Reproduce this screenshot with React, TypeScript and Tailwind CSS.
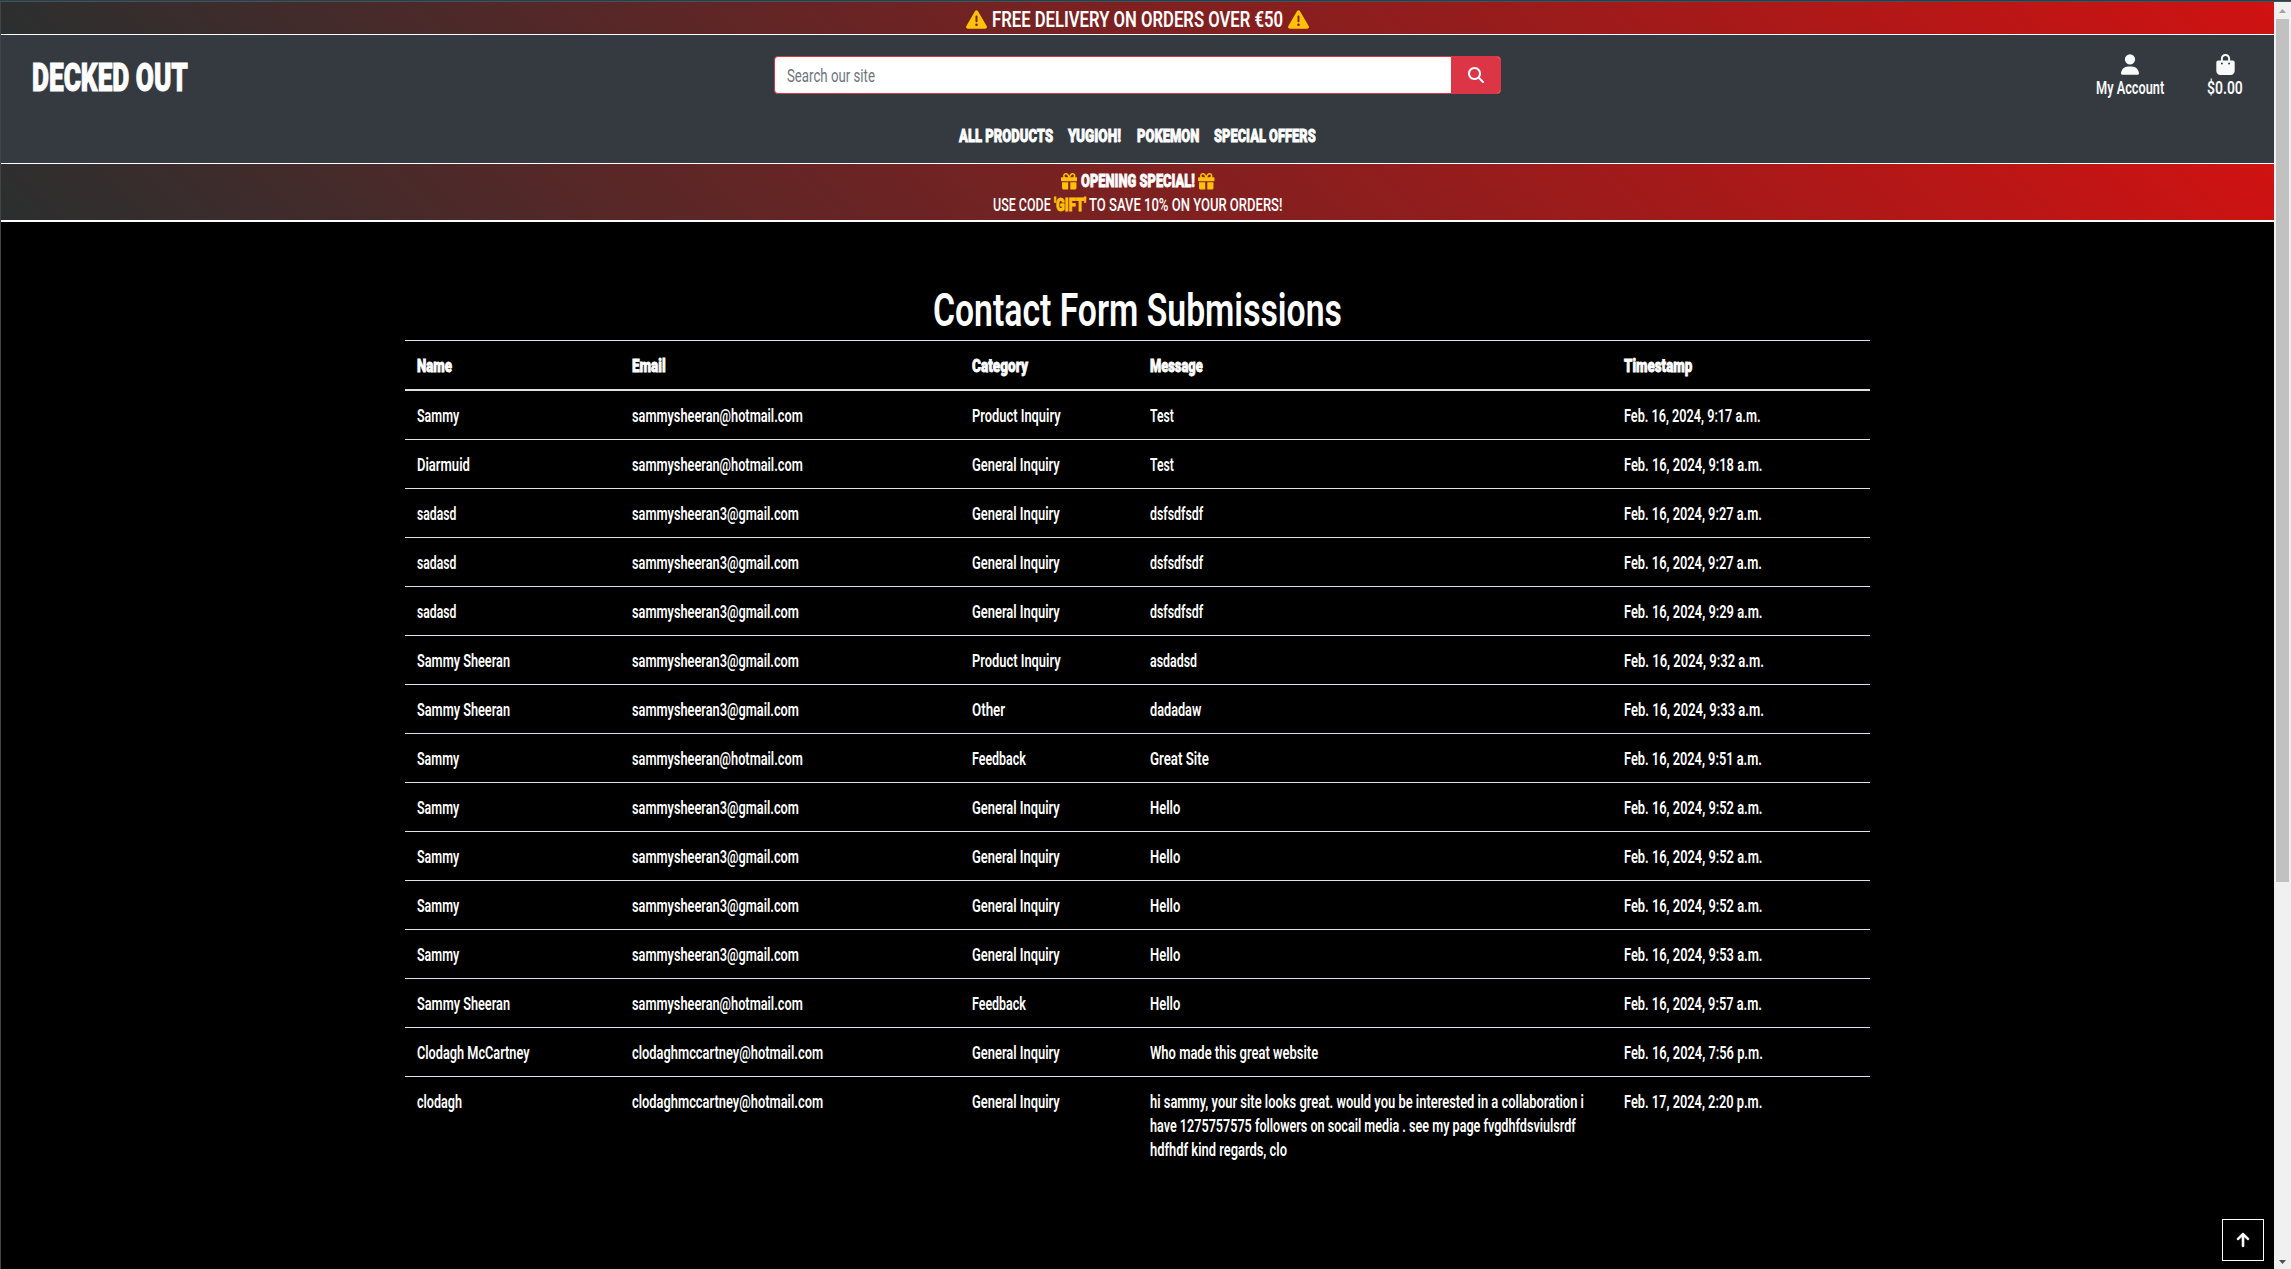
import { useLayoutEffect, useRef, useState } from "react";
import {
  FaArrowUp,
  FaBagShopping,
  FaGift,
  FaMagnifyingGlass,
  FaTriangleExclamation,
  FaUser,
} from "react-icons/fa6";

// Condenses a single line of text horizontally so it fills exactly `w` pixels.
function Fit({ w, children, className = "" }: { w: number; children: string; className?: string }) {
  const ref = useRef<HTMLSpanElement>(null);
  const [scale, setScale] = useState(1);
  useLayoutEffect(() => {
    if (ref.current) setScale(w / ref.current.offsetWidth);
  }, [w, children]);
  return (
    <span className={`block shrink-0 ${className}`} style={{ width: w }}>
      <span
        ref={ref}
        className="block w-max origin-left whitespace-nowrap"
        style={{ transform: `scaleX(${scale})` }}
      >
        {children}
      </span>
    </span>
  );
}

type Cell = [string, number];
const HOT: Cell = ["sammysheeran@hotmail.com", 171];
const GM: Cell = ["sammysheeran3@gmail.com", 167];
const CLO: Cell = ["clodaghmccartney@hotmail.com", 191];
const PRODUCT: Cell = ["Product Inquiry", 88.5];
const GENERAL: Cell = ["General Inquiry", 88];
const FEEDBACK: Cell = ["Feedback", 54];
const SAMMY: Cell = ["Sammy", 42.5];
const SADASD: Cell = ["sadasd", 39.5];
const SHEERAN: Cell = ["Sammy Sheeran", 93];
const HELLO: Cell = ["Hello", 30];
const DSF: Cell = ["dsfsdfsdf", 53];

const rows: { name: Cell; email: Cell; category: Cell; message: Cell[]; time: Cell }[] = [
  { name: SAMMY, email: HOT, category: PRODUCT, message: [["Test", 24]], time: ["Feb. 16, 2024, 9:17 a.m.", 136.5] },
  { name: ["Diarmuid", 53], email: HOT, category: GENERAL, message: [["Test", 24]], time: ["Feb. 16, 2024, 9:18 a.m.", 138.5] },
  { name: SADASD, email: GM, category: GENERAL, message: [DSF], time: ["Feb. 16, 2024, 9:27 a.m.", 138] },
  { name: SADASD, email: GM, category: GENERAL, message: [DSF], time: ["Feb. 16, 2024, 9:27 a.m.", 138] },
  { name: SADASD, email: GM, category: GENERAL, message: [DSF], time: ["Feb. 16, 2024, 9:29 a.m.", 138.5] },
  { name: SHEERAN, email: GM, category: PRODUCT, message: [["asdadsd", 47]], time: ["Feb. 16, 2024, 9:32 a.m.", 140] },
  { name: SHEERAN, email: GM, category: ["Other", 33], message: [["dadadaw", 51]], time: ["Feb. 16, 2024, 9:33 a.m.", 140] },
  { name: SAMMY, email: HOT, category: FEEDBACK, message: [["Great Site", 59]], time: ["Feb. 16, 2024, 9:51 a.m.", 138] },
  { name: SAMMY, email: GM, category: GENERAL, message: [HELLO], time: ["Feb. 16, 2024, 9:52 a.m.", 138.5] },
  { name: SAMMY, email: GM, category: GENERAL, message: [HELLO], time: ["Feb. 16, 2024, 9:52 a.m.", 138.5] },
  { name: SAMMY, email: GM, category: GENERAL, message: [HELLO], time: ["Feb. 16, 2024, 9:52 a.m.", 138.5] },
  { name: SAMMY, email: GM, category: GENERAL, message: [HELLO], time: ["Feb. 16, 2024, 9:53 a.m.", 138.5] },
  { name: SHEERAN, email: HOT, category: FEEDBACK, message: [HELLO], time: ["Feb. 16, 2024, 9:57 a.m.", 138] },
  { name: ["Clodagh McCartney", 112.5], email: CLO, category: GENERAL, message: [["Who made this great website", 168]], time: ["Feb. 16, 2024, 7:56 p.m.", 138.5] },
  {
    name: ["clodagh", 45],
    email: CLO,
    category: GENERAL,
    message: [
      ["hi sammy, your site looks great. would you be interested in a collaboration i", 434],
      ["have 1275757575 followers on socail media . see my page fvgdhfdsviulsrdf", 426],
      ["hdfhdf kind regards, clo", 137],
    ],
    time: ["Feb. 17, 2024, 2:20 p.m.", 138],
  },
];

const heads: Cell[] = [["Name", 35], ["Email", 34], ["Category", 56], ["Message", 53], ["Timestamp", 68]];

function Banners() {
  return (
    <header className="shrink-0">
      <div className="flex h-[33px] items-start justify-center gap-[5px] border-b border-white bg-linear-45/srgb from-[#2b2f2f] to-[#d01212] pt-[5px]">
        <FaTriangleExclamation className="mt-[2px] size-[21px] text-[#ffc107]" />
        <Fit w={291} className="pt-px text-[22.8px] leading-6 font-semibold">FREE DELIVERY ON ORDERS OVER €50</Fit>
        <FaTriangleExclamation className="mt-[2px] size-[21px] text-[#ffc107]" />
      </div>

      <div className="h-[129px] border-b border-white bg-[#343a40]">
        <div className="grid h-[89px] grid-cols-[773px_727px_1fr] items-start">
          <Fit w={156} className="ml-[31px] pt-[23px] text-[38px] leading-10 font-black [-webkit-text-stroke:1px_white]">DECKED OUT</Fit>
          <div className="mt-[21px] flex h-[38px] overflow-hidden rounded-[4px] border border-[#dc3545] bg-white">
            <div className="flex-1 pt-[7px] pl-3 text-[#6c757d]">
              <Fit w={88}>Search our site</Fit>
            </div>
            <button className="flex w-[49px] items-center justify-center bg-[#dc3545]">
              <FaMagnifyingGlass className="size-4" />
            </button>
          </div>
          <div className="flex justify-end gap-[43px] pt-[19px] pr-[31px] text-[#f8f9fa]">
            <div className="flex flex-col items-center">
              <FaUser className="h-[21px] w-[18px]" />
              <Fit w={68} className="mt-px font-semibold">My Account</Fit>
            </div>
            <div className="flex flex-col items-center">
              <FaBagShopping className="h-[21px] w-[19px]" />
              <Fit w={36} className="mt-px font-semibold">$0.00</Fit>
            </div>
          </div>
        </div>
        <nav className="flex justify-center gap-[15.5px] font-black [-webkit-text-stroke:0.8px_white]">
          <Fit w={94}>ALL PRODUCTS</Fit>
          <Fit w={53}>YUGIOH!</Fit>
          <Fit w={62}>POKEMON</Fit>
          <Fit w={102}>SPECIAL OFFERS</Fit>
        </nav>
      </div>

      <div className="h-[58px] border-b-2 border-white bg-linear-45/srgb from-[#2b2f2f] to-[#d01212] pt-[5px]">
        <div className="flex justify-center gap-[3.5px]">
          <FaGift className="mt-[4px] size-[16.5px] text-[#ffc107]" />
          <Fit w={114} className="font-black [-webkit-text-stroke:0.8px_white]">OPENING SPECIAL!</Fit>
          <FaGift className="mt-[4px] size-[16.5px] text-[#ffc107]" />
        </div>
        <div className="flex justify-center gap-[3.5px] font-medium">
          <Fit w={57.5}>USE CODE</Fit>
          <Fit w={32} className="font-black text-[#ffc107] [-webkit-text-stroke:0.8px_#ffc107]">'GIFT'</Fit>
          <Fit w={193.5}>TO SAVE 10% ON YOUR ORDERS!</Fit>
        </div>
      </div>
    </header>
  );
}

function Submissions() {
  return (
    <main className="flex flex-1 flex-col items-center pt-[65px]">
      <h1 className="h-[53px] text-[45.5px] leading-[48px] font-semibold">
        <Fit w={409}>Contact Form Submissions</Fit>
      </h1>
      <table className="w-[1465px] table-fixed border-separate border-spacing-0 text-left">
        <colgroup>
          <col className="w-[215px]" />
          <col className="w-[340px]" />
          <col className="w-[178px]" />
          <col className="w-[474px]" />
          <col className="w-[258px]" />
        </colgroup>
        <thead>
          <tr>
            {heads.map(([t, w]) => (
              <th key={t} className="border-t border-b-2 border-[#dee2e6] px-3 pt-[13px] pb-[11px] font-black [-webkit-text-stroke:0.8px_white]">
                <Fit w={w}>{t}</Fit>
              </th>
            ))}
          </tr>
        </thead>
        <tbody className="font-semibold [&>tr+tr>td]:border-t">
          {rows.map((r, i) => (
            <tr key={i}>
              {[[r.name], [r.email], [r.category], r.message, [r.time]].map((lines, j) => (
                <td key={j} className="border-[#dee2e6] px-3 pt-[13px] pb-[11px] align-top">
                  {lines.map(([t, w]) => (
                    <Fit key={t} w={w}>{t}</Fit>
                  ))}
                </td>
              ))}
            </tr>
          ))}
        </tbody>
      </table>
    </main>
  );
}

export default function App() {
  return (
    <div className="relative flex h-[1269px] w-[2291px] flex-col overflow-hidden bg-black font-[Roboto,sans-serif] text-[18.2px] leading-6 text-white">
      <div className="h-[2px] shrink-0 border-b border-[#44525a] bg-[#2b3f4b]" />
      <div className="flex min-h-0 flex-1">
        <div className="flex w-[2274px] flex-col border-l border-[#444444]">
          <Banners />
          <Submissions />
        </div>
        <div className="flex w-[17px] flex-col items-center bg-[#f0f0f0]">
          <svg viewBox="0 0 7 4" className="mt-[7px] h-1 w-[7px]" fill="#a3a3a3">
            <path d="M3.5 0L7 4H0z" />
          </svg>
          <div className="mt-[6px] h-[863px] w-[13px] bg-[#c1c1c1]" />
          <svg viewBox="0 0 7 4" className="mt-auto mb-[5px] h-1 w-[7px]" fill="#505050">
            <path d="M0 0h7L3.5 4z" />
          </svg>
        </div>
      </div>
      <button className="absolute right-[27px] bottom-[8px] flex size-[42px] items-center justify-center border border-white bg-black">
        <FaArrowUp className="size-4" stroke="white" strokeWidth={20} />
      </button>
    </div>
  );
}
